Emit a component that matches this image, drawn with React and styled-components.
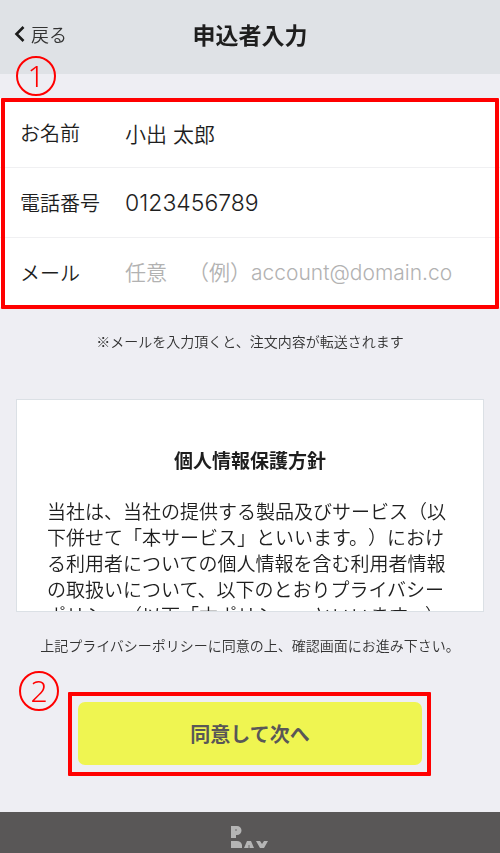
import React from 'react';
import styled, { createGlobalStyle } from 'styled-components';

const App = () => {
  return (
    <Page>
      <GlobalStyle />
      <Header>
        <BackButton type="button">
          <svg width="11" height="18" viewBox="0 0 11 18" aria-hidden="true">
            <path d="M9.5 2 L2.5 9 L9.5 16" fill="none" stroke="#1c1c1c" strokeWidth="2.6" />
          </svg>
          戻る
        </BackButton>
        <Title>申込者入力</Title>
      </Header>

      <Form>
        <Row>
          <Label htmlFor="name">お名前</Label>
          <Input id="name" type="text" defaultValue="小出 太郎" />
        </Row>
        <Row>
          <Label htmlFor="tel">電話番号</Label>
          <Input id="tel" type="tel" defaultValue="0123456789" $large />
        </Row>
        <Row>
          <Label htmlFor="mail">メール</Label>
          <Input id="mail" type="email" placeholder="任意　（例）account@domain.co" />
        </Row>
        <Marker $top="-42px" $left="16px">1</Marker>
      </Form>
      <Note>※メールを入力頂くと、注文内容が転送されます</Note>

      <Policy>
        <h2>個人情報保護方針</h2>
        <p>
          当社は、当社の提供する製品及びサービス（以下併せて「本サービス」といいます。）における利用者についての個人情報を含む利用者情報の取扱いについて、以下のとおりプライバシーポリシー（以下「本ポリシー」といいます。）
        </p>
      </Policy>
      <Note>上記プライバシーポリシーに同意の上、確認画面にお進み下さい。</Note>

      <Submit>
        <SubmitButton type="button">同意して次へ</SubmitButton>
        <Marker $top="-25px" $left="-53px">2</Marker>
      </Submit>

      <Footer>
        <svg width="38" height="22" viewBox="0 0 38 22" role="img" aria-label="PAY">
          <g fill="#b5b5b5">
            <path d="M0 0 H6 A4.5 4.5 0 0 1 6 9 H5 V12 H0 Z" />
            <path d="M0 15 H6 Q10 15 11 19 V22 H0 Z" />
            <path d="M16 15 H20 L23 22 H13 Z" />
            <path d="M25 15 H29 L31 18 L33 15 H37 L33 22 H29 Z" />
          </g>
          <rect x="4" y="3" width="2" height="2" fill="#8f8e8e" />
          <rect x="17" y="19" width="2" height="3" fill="#8f8e8e" />
        </svg>
      </Footer>
    </Page>
  );
};

export default App;

const GlobalStyle = createGlobalStyle`
  * {
    box-sizing: border-box;
  }
  body {
    margin: 0;
    background: #eeeef3;
  }
  body, button {
    font-family: 'Noto Sans CJK JP', sans-serif;
  }
`;

const Page = styled.div`
  color: #1e1e1e;
  background: #eeeef3;
`;

const Header = styled.header`
  display: grid;
  grid-template-columns: 1fr auto 1fr;
  align-items: center;
  height: 74px;
  padding: 0 14px 6px;
  background: #dfe2e6;
`;

const BackButton = styled.button`
  display: flex;
  align-items: center;
  gap: 6px;
  justify-self: start;
  padding: 0;
  border: 0;
  background: none;
  color: #333;
  font-size: 18px;
  font-weight: 350;
  line-height: 26px;
`;

const Title = styled.h1`
  margin: 0;
  font-size: 23px;
  font-weight: 700;
  line-height: 26px;
`;

const Form = styled.form`
  position: relative;
  margin-top: 24px;
  background: #fff;
  &::after {
    content: '';
    position: absolute;
    inset: 0 1px -1px;
    border: 4px solid #f00;
    border-radius: 1px;
    pointer-events: none;
  }
`;

const Row = styled.div`
  display: flex;
  align-items: center;
  height: 70px;
  padding: 0 46px 0 20px;
  border-bottom: 1px solid #f0f0f2;
`;

const Label = styled.label`
  flex: 0 0 105px;
  font-size: 20px;
  font-weight: 350;
`;

const Input = styled.input`
  flex: 1;
  min-width: 0;
  padding: 0;
  border: 0;
  outline: 0;
  background: none;
  color: #1e1e1e;
  font-family: Inter, 'Noto Sans CJK JP', sans-serif;
  font-size: ${({ $large }) => ($large ? '23px' : '21px')};
  font-weight: 350;
  text-spacing-trim: space-all;
  &::placeholder {
    color: #b2b2b2;
    opacity: 1;
  }
`;

const Marker = styled.span`
  position: absolute;
  top: ${({ $top }) => $top};
  left: ${({ $left }) => $left};
  width: 40px;
  height: 40px;
  border: 2px solid #f00;
  border-radius: 50%;
  color: #f00;
  font-family: 'Noto Sans', sans-serif;
  font-size: 30px;
  font-weight: 300;
  line-height: 36px;
  text-align: center;
`;

const Note = styled.p`
  margin: 23px 0 0;
  color: #333;
  font-size: 14px;
  font-weight: 350;
  line-height: 20px;
  text-align: center;
  text-spacing-trim: space-all;
`;

const Policy = styled.section`
  height: 213px;
  margin: 48px 16px 0;
  padding: 47px 30px 0;
  overflow-y: auto;
  scrollbar-width: none;
  border: 1px solid #dbe0e5;
  background: #fff;
  font-size: 19px;
  line-height: 26px;
  text-spacing-trim: space-all;
  h2 {
    margin: 0;
    font-size: 19px;
    font-weight: 700;
    text-align: center;
  }
  p {
    margin: 25px 0 0;
    font-weight: 350;
  }
`;

const Submit = styled.div`
  position: relative;
  margin: 37px 69px 0 68px;
  padding: 6px 5px 7px 6px;
  border: 4px solid #f00;
  border-radius: 1px;
`;

const SubmitButton = styled.button`
  display: block;
  width: 100%;
  height: 63px;
  padding: 0;
  border: 0;
  border-radius: 7px;
  background: #eff551;
  color: #595757;
  font-size: 20px;
  font-weight: 700;
`;

const Footer = styled.footer`
  display: flex;
  justify-content: center;
  margin-top: 36px;
  padding: 14px 0 6px;
  background: #595757;
`;
